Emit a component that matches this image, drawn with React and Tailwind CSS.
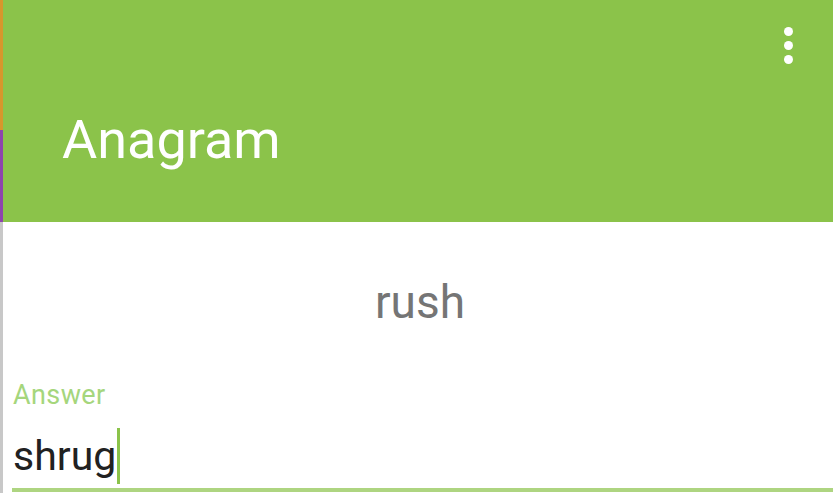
export default function App() {
  return (
    <div
      className="flex w-[833px] h-[493px] overflow-hidden bg-white"
      style={{ fontFamily: "Roboto, 'Noto Sans', sans-serif" }}
    >
      <div className="flex flex-col w-[3px] shrink-0">
        <div className="h-[130px] bg-[#d6972c]" />
        <div className="h-[92px] bg-[#8e44ad]" />
        <div className="flex-1 bg-[#c8c8c8]" />
      </div>
      <div className="flex flex-col flex-1">
        <header className="relative h-[222px] shrink-0 bg-[#8bc34a] flex items-end pl-[59px] pb-[55px]">
          <h1 className="text-[54px] leading-none text-white font-normal">Anagram</h1>
          <div className="absolute right-[40px] top-[27px] flex flex-col gap-[5px]">
            <span className="w-[9px] h-[9px] rounded-full bg-white" />
            <span className="w-[9px] h-[9px] rounded-full bg-white" />
            <span className="w-[9px] h-[9px] rounded-full bg-white" />
          </div>
        </header>
        <div className="flex justify-center pt-[57px] pl-[4px]">
          <span className="text-[46px] leading-none text-[#757575]">rush</span>
        </div>
        <div className="pl-[10px] pt-[57px]">
          <div className="text-[27px] leading-none tracking-[0.4px] text-[#a5d67c]">Answer</div>
          <div className="flex items-start mt-[19px] h-[56px]">
            <span className="text-[41px] leading-none text-[#212121] mt-[8px]">shrug</span>
            <span className="w-[3px] h-[56px] bg-[#8bc34a] ml-[1px]" />
          </div>
          <div className="h-[4px] bg-[#aed581] mt-[4px] -ml-[1px]" />
        </div>
      </div>
    </div>
  );
}
